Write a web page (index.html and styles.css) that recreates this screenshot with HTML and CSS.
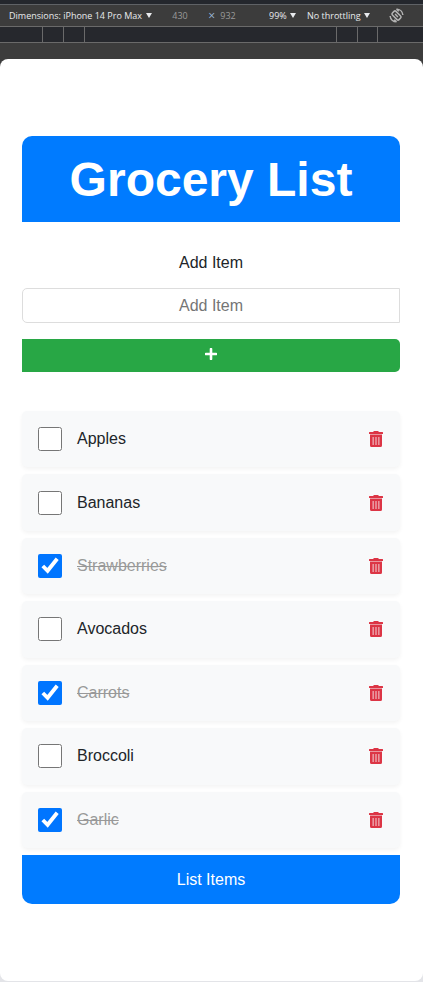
FILE: index.html
```html
<!DOCTYPE html>
<html lang="en">
<head>
<meta charset="utf-8">
<meta name="viewport" content="width=device-width, initial-scale=1">
<title>Grocery List</title>
<link rel="stylesheet" href="styles.css">
</head>
<body>
<svg class="sprite" aria-hidden="true">
  <symbol id="trash" viewBox="0 0 14 16">
    <path fill="currentColor" fill-rule="evenodd" d="M5 0h4l1 1h3.500q.5 0 .5.500V3H0V1.500q0-.5.500-.5H4zM1 3.600h12v10.900q0 1.500-1.500 1.500h-9Q1 16 1 14.500zM3.700 6v8h.8V6zm2.900 0v8h.8V6zm2.900 0v8h.8V6z"/>
  </symbol>
  <symbol id="arrow" viewBox="0 0 6 5"><path fill="currentColor" d="M0 0h6L3 5z"/></symbol>
</svg>
<header class="device">
  <div class="toolbar">
    <label class="picker">
      <select aria-label="Device"><option>Dimensions: iPhone 14 Pro Max</option></select>
      <svg class="arrow"><use href="#arrow"/></svg>
    </label>
    <div class="size">
      <input type="text" value="430" aria-label="Width">
      <span class="times">×</span>
      <input type="text" value="932" aria-label="Height">
    </div>
    <label class="picker">
      <select aria-label="Zoom"><option>99%</option></select>
      <svg class="arrow"><use href="#arrow"/></svg>
    </label>
    <label class="picker">
      <select aria-label="Throttling"><option>No throttling</option></select>
      <svg class="arrow"><use href="#arrow"/></svg>
    </label>
    <button class="rotate" type="button" aria-label="Rotate">
      <svg viewBox="0 0 16 16" fill="none" stroke="currentColor" stroke-width="1.600">
        <rect x="5.300" y="3" width="5.400" height="10" rx="1.500" transform="rotate(-45 8 8)"/>
        <path d="M6.500 6.500l3 3M8 1.200A7 7 0 0 1 14.800 7.500M8 1.200l2.500 2.300M8 14.800A7 7 0 0 1 1.200 8.500M8 14.800l-2.500-2.300"/>
      </svg>
    </button>
  </div>
  <div class="ruler"><span class="outer"></span><span class="inner"></span><span class="middle"></span><span class="inner"></span><span class="outer"></span></div>
</header>
<main class="page">
  <h1>Grocery List</h1>
  <form class="add">
    <label for="item">Add Item</label>
    <input id="item" type="text" placeholder="Add Item">
    <button type="button" aria-label="Add">
      <svg viewBox="0 0 12 12"><path d="M6 1v10M1 6h10" stroke="currentColor" stroke-width="2.600" stroke-linecap="round"/></svg>
    </button>
  </form>
  <ul class="items">
    <li><label><input type="checkbox"><span>Apples</span></label><button type="button" aria-label="Delete Apples"><svg><use href="#trash"/></svg></button></li>
    <li><label><input type="checkbox"><span>Bananas</span></label><button type="button" aria-label="Delete Bananas"><svg><use href="#trash"/></svg></button></li>
    <li><label><input type="checkbox" checked><span>Strawberries</span></label><button type="button" aria-label="Delete Strawberries"><svg><use href="#trash"/></svg></button></li>
    <li><label><input type="checkbox"><span>Avocados</span></label><button type="button" aria-label="Delete Avocados"><svg><use href="#trash"/></svg></button></li>
    <li><label><input type="checkbox" checked><span>Carrots</span></label><button type="button" aria-label="Delete Carrots"><svg><use href="#trash"/></svg></button></li>
    <li><label><input type="checkbox"><span>Broccoli</span></label><button type="button" aria-label="Delete Broccoli"><svg><use href="#trash"/></svg></button></li>
    <li><label><input type="checkbox" checked><span>Garlic</span></label><button type="button" aria-label="Delete Garlic"><svg><use href="#trash"/></svg></button></li>
  </ul>
  <footer>List Items</footer>
</main>
</body>
</html>
```
FILE: styles.css
```css
* {
  box-sizing: border-box;
}

body {
  margin: 0;
  min-height: 100vh;
  display: flex;
  flex-direction: column;
  background: linear-gradient(#3c3c3c 50%, #e3e4e8 50%);
  color: #212529;
  font: 16px/24px "Liberation Sans", Arial, sans-serif;
}

button,
input,
select {
  margin: 0;
  padding: 0;
  border: 0;
  background: none;
  color: inherit;
  font: inherit;
}

.sprite {
  position: absolute;
  width: 0;
  height: 0;
}

.device {
  padding-bottom: 16px;
  border-top: 4px solid #24272d;
  background: #3c3c3c;
  color: #e8eaed;
  font: 9px/14px "Open Sans", "Noto Sans", sans-serif;
}

.toolbar {
  display: flex;
  align-items: center;
  height: 23px;
  padding: 0 19px 0 9px;
  border-top: 1px solid #5f6266;
  border-bottom: 1px solid #6a6a6a;
}

.picker {
  display: flex;
  align-items: center;
  gap: 3px;
  margin-right: 11px;
}

.picker select {
  appearance: none;
}

.arrow {
  width: 6px;
  height: 5px;
}

.size {
  display: flex;
  margin: 0 auto 0 4px;
  color: #9a9a9a;
}

.size input {
  width: 26px;
  text-align: center;
}

.times {
  width: 22px;
  color: #9bb8d8;
  font-size: 12px;
  text-align: right;
}

.rotate {
  display: flex;
  margin-left: 8px;
  color: #b4b4b4;
}

.rotate svg {
  width: 15px;
  height: 15px;
}

.ruler {
  display: flex;
  justify-content: center;
  height: 16px;
  padding-right: 4px;
  border-bottom: 1px solid #6a6a6a;
  background: #26282d;
}

.ruler span {
  border: solid #6a6a6a;
  border-width: 0 0 0 1px;
}

.ruler .outer,
.ruler .inner {
  width: 21px;
}

.ruler .middle {
  width: 252px;
}

.ruler .outer:last-child {
  border-width: 0 1px;
}

.page {
  flex: 1;
  margin-bottom: 1px;
  padding: 77px 23px 77px 22px;
  border-radius: 8px;
  background: #fff;
}

h1 {
  margin: 0;
  padding: 15px 0 13px;
  border-radius: 10px 10px 0 0;
  background: #007bff;
  color: #fff;
  font-size: 48px;
  line-height: 58px;
  text-align: center;
}

.add {
  display: flex;
  flex-direction: column;
  margin: 29px 0 39px;
  text-align: center;
}

.add input {
  height: 35px;
  margin: 13px 0 16px;
  border: 1px solid #ddd;
  border-radius: 5px 0 0 5px;
  text-align: center;
}

.add input::placeholder {
  color: #757575;
}

.add button {
  display: flex;
  align-items: center;
  justify-content: center;
  height: 33px;
  padding: 0 0 4px;
  border-radius: 0 5px 5px 0;
  background: #28a745;
  color: #fff;
}

.add svg {
  width: 12px;
  height: 12px;
}

.items {
  display: grid;
  grid-auto-rows: 1fr;
  gap: 7px;
  min-height: 437px;
  margin: 0 0 7px;
  padding: 0;
  list-style: none;
}

.items li {
  display: flex;
  align-items: center;
  justify-content: space-between;
  padding: 0 17px 0 16px;
  border-radius: 5px;
  background: #f8f9fa;
  box-shadow: 0 2px 4px rgba(0, 0, 0, 0.05);
}

.items label {
  display: flex;
  align-items: center;
  gap: 15px;
}

.items input {
  width: 24px;
  height: 24px;
}

.items input:checked + span {
  color: #999;
  text-decoration: line-through;
}

.items button {
  display: flex;
  color: #dc3545;
}

.items svg {
  width: 14px;
  height: 16px;
}

footer {
  padding: 13px 0 12px;
  border-radius: 0 0 10px 10px;
  background: #007bff;
  color: #fff;
  text-align: center;
}
```
